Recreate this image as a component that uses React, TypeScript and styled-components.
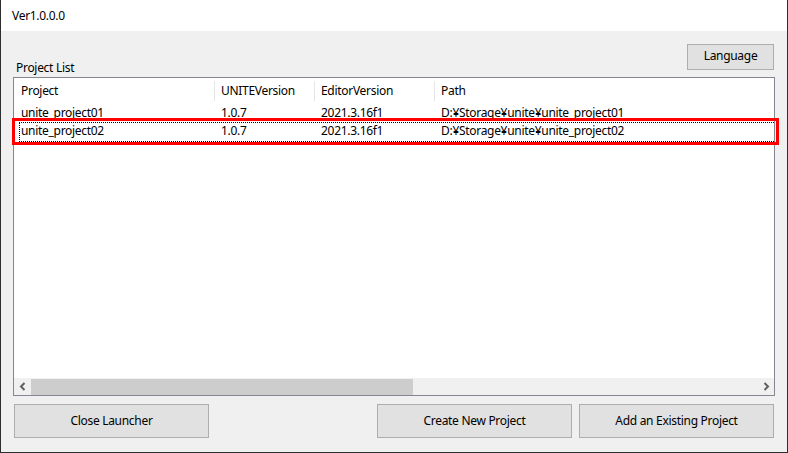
import React from "react";
import styled, { createGlobalStyle } from "styled-components";

const GlobalStyle = createGlobalStyle`
  html, body { margin: 0; padding: 0; background: #f0f0f0; }
  body { font-family: "Noto Sans", "Segoe UI", sans-serif; font-size: 12px; letter-spacing: -0.3px; color: #000; }
  * { box-sizing: border-box; }
`;

const Window = styled.div`
  width: 788px;
  height: 453px;
  display: flex;
  flex-direction: column;
  border-left: 1px solid #2e2e2e;
  border-right: 1px solid #2e2e2e;
  border-bottom: 1px solid #2e2e2e;
  background: #f0f0f0;
  position: relative;
`;

const TitleBar = styled.div`
  height: 31px;
  flex: none;
  background: #ffffff;
  display: flex;
  align-items: center;
  padding-left: 11px;
  padding-bottom: 1px;
`;

const Body = styled.div`
  flex: 1;
  display: flex;
  flex-direction: column;
  padding: 13px 12px 15px 12px;
`;

const HeadRow = styled.div`
  height: 33px;
  display: flex;
  justify-content: space-between;
  align-items: flex-start;
`;

const Label = styled.div`
  align-self: flex-end;
  margin: 0 0 1px 3px;
  line-height: 16px;
`;

const Button = styled.button<{ $w: number; $h: number }>`
  width: ${(p) => p.$w}px;
  height: ${(p) => p.$h}px;
  background: #e1e1e1;
  border: 1px solid #adadad;
  font-family: inherit;
  font-size: inherit;
  letter-spacing: inherit;
  color: #000;
  padding: 0 0 2px 0;
  margin: 0;
  display: flex;
  align-items: center;
  justify-content: center;
`;

const LangButton = styled(Button)`
  margin-right: 1px;
  padding-bottom: 3px;
`;

const ListView = styled.div`
  height: 319px;
  border: 1px solid #828790;
  background: #ffffff;
  display: flex;
  flex-direction: column;
  overflow: hidden;
`;

const Rows = styled.div`
  flex: 1;
  display: flex;
  flex-direction: column;
`;

const cols = "200px 100px 120px 400px";

const HeaderRow = styled.div`
  height: 26px;
  display: grid;
  grid-template-columns: ${cols};
  align-items: center;
  padding-bottom: 1px;
`;

const HeaderCell = styled.div<{ $first?: boolean }>`
  height: 20px;
  display: flex;
  align-items: center;
  padding-left: ${(p) => (p.$first ? 7 : 6)}px;
  border-left: ${(p) => (p.$first ? "none" : "1px solid #e5e5e5")};
  white-space: nowrap;
`;

const Row = styled.div<{ $focused?: boolean }>`
  height: 18px;
  display: grid;
  grid-template-columns: ${cols};
  align-items: center;
  position: relative;
  white-space: nowrap;
  ${(p) =>
    p.$focused
      ? `&::after {
          content: "";
          position: absolute;
          left: 5px;
          top: 0;
          width: 755px;
          height: 18px;
          border: 1px dotted #000;
        }`
      : ""}
`;

const Cell = styled.div`
  padding-left: 7px;
  line-height: 18px;
`;

const HScroll = styled.div`
  height: 17px;
  flex: none;
  display: flex;
  background: #f0f0f0;
`;

const Arrow = styled.div`
  width: 17px;
  height: 17px;
  display: flex;
  align-items: center;
  justify-content: center;
  flex: none;
`;

const Track = styled.div`
  flex: 1;
  display: flex;
  align-items: stretch;
  padding: 1px 0 0 0;
`;

const Thumb = styled.div`
  background: #cdcdcd;
`;

const ButtonRow = styled.div`
  margin-top: 8px;
  padding: 0 1px;
  display: flex;
  gap: 7px;
`;

const Spacer = styled.div`
  flex: 1;
`;

const Annotation = styled.div`
  position: absolute;
  left: 11px;
  top: 118px;
  width: 767px;
  height: 27px;
  border: 3px solid #ff0000;
  pointer-events: none;
`;

const projects = [
  { name: "unite_project01", unite: "1.0.7", editor: "2021.3.16f1", path: "D:¥Storage¥unite¥unite_project01" },
  { name: "unite_project02", unite: "1.0.7", editor: "2021.3.16f1", path: "D:¥Storage¥unite¥unite_project02" },
];

const Chevron = ({ dir }: { dir: "left" | "right" }) => (
  <svg width="8" height="9" viewBox="0 0 8 9">
    <polyline
      points={dir === "left" ? "5.5,1 2,4.5 5.5,8" : "2.5,1 6,4.5 2.5,8"}
      fill="none"
      stroke="#606060"
      strokeWidth="2"
    />
  </svg>
);

export default function App() {
  return (
    <>
      <GlobalStyle />
      <Window>
        <TitleBar>Ver1.0.0.0</TitleBar>
        <Body>
          <HeadRow>
            <Label>Project List</Label>
            <LangButton $w={87} $h={26}>Language</LangButton>
          </HeadRow>
          <ListView>
            <Rows>
              <HeaderRow>
                <HeaderCell $first>Project</HeaderCell>
                <HeaderCell>UNITEVersion</HeaderCell>
                <HeaderCell>EditorVersion</HeaderCell>
                <HeaderCell>Path</HeaderCell>
              </HeaderRow>
              {projects.map((p, i) => (
                <Row key={p.name} $focused={i === 1}>
                  <Cell>{p.name}</Cell>
                  <Cell>{p.unite}</Cell>
                  <Cell>{p.editor}</Cell>
                  <Cell>{p.path}</Cell>
                </Row>
              ))}
            </Rows>
            <HScroll>
              <Arrow>
                <Chevron dir="left" />
              </Arrow>
              <Track>
                <Thumb style={{ width: "52.6%" }} />
              </Track>
              <Arrow>
                <Chevron dir="right" />
              </Arrow>
            </HScroll>
          </ListView>
          <ButtonRow>
            <Button $w={195} $h={34}>Close Launcher</Button>
            <Spacer />
            <Button $w={195} $h={34}>Create New Project</Button>
            <Button $w={195} $h={34}>Add an Existing Project</Button>
          </ButtonRow>
        </Body>
        <Annotation />
      </Window>
    </>
  );
}
